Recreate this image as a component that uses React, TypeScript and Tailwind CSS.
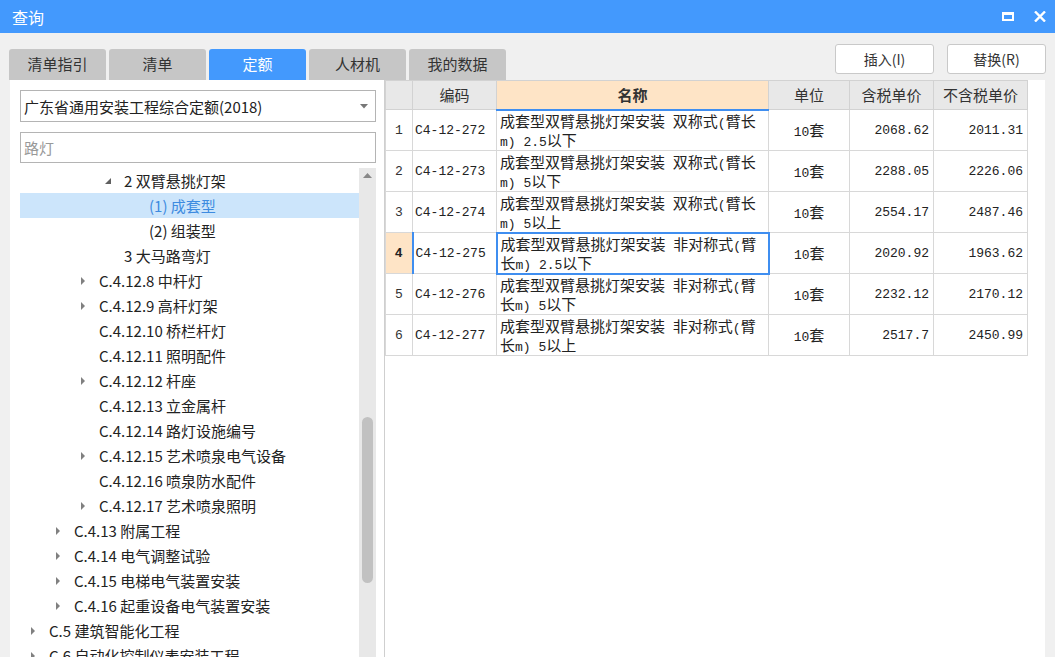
import React from 'react';

// 查询窗口：左侧定额树，右侧定额列表
const TABS = ['清单指引', '清单', '定额', '人材机', '我的数据'];

type TreeNode = { level: number; arrow?: 'open' | 'closed'; text: string; selected?: boolean };

const TREE: TreeNode[] = [
  { level: 3, arrow: 'open', text: '2 双臂悬挑灯架' },
  { level: 4, text: '(1) 成套型', selected: true },
  { level: 4, text: '(2) 组装型' },
  { level: 3, text: '3 大马路弯灯' },
  { level: 2, arrow: 'closed', text: 'C.4.12.8 中杆灯' },
  { level: 2, arrow: 'closed', text: 'C.4.12.9 高杆灯架' },
  { level: 2, text: 'C.4.12.10 桥栏杆灯' },
  { level: 2, text: 'C.4.12.11 照明配件' },
  { level: 2, arrow: 'closed', text: 'C.4.12.12 杆座' },
  { level: 2, text: 'C.4.12.13 立金属杆' },
  { level: 2, text: 'C.4.12.14 路灯设施编号' },
  { level: 2, arrow: 'closed', text: 'C.4.12.15 艺术喷泉电气设备' },
  { level: 2, text: 'C.4.12.16 喷泉防水配件' },
  { level: 2, arrow: 'closed', text: 'C.4.12.17 艺术喷泉照明' },
  { level: 1, arrow: 'closed', text: 'C.4.13 附属工程' },
  { level: 1, arrow: 'closed', text: 'C.4.14 电气调整试验' },
  { level: 1, arrow: 'closed', text: 'C.4.15 电梯电气装置安装' },
  { level: 1, arrow: 'closed', text: 'C.4.16 起重设备电气装置安装' },
  { level: 0, arrow: 'closed', text: 'C.5 建筑智能化工程' },
  { level: 0, arrow: 'closed', text: 'C.6 自动化控制仪表安装工程' },
];

const INDENT = ['pl-[10px]', 'pl-[35px]', 'pl-[60px]', 'pl-[85px]', 'pl-[110px]'];

const ROWS = [
  { code: 'C4-12-272', name: ['成套型双臂悬挑灯架安装 双称式(臂长', 'm) 2.5以下'], unit: '10套', tax: '2068.62', noTax: '2011.31' },
  { code: 'C4-12-273', name: ['成套型双臂悬挑灯架安装 双称式(臂长', 'm) 5以下'], unit: '10套', tax: '2288.05', noTax: '2226.06' },
  { code: 'C4-12-274', name: ['成套型双臂悬挑灯架安装 双称式(臂长', 'm) 5以上'], unit: '10套', tax: '2554.17', noTax: '2487.46' },
  { code: 'C4-12-275', name: ['成套型双臂悬挑灯架安装 非对称式(臂', '长m) 2.5以下'], unit: '10套', tax: '2020.92', noTax: '1963.62' },
  { code: 'C4-12-276', name: ['成套型双臂悬挑灯架安装 非对称式(臂', '长m) 5以下'], unit: '10套', tax: '2232.12', noTax: '2170.12' },
  { code: 'C4-12-277', name: ['成套型双臂悬挑灯架安装 非对称式(臂', '长m) 5以上'], unit: '10套', tax: '2517.7', noTax: '2450.99' },
];

const SELECTED_ROW = 3;

// 半角字符用等宽字体，模拟宋体的效果
const Mixed: React.FC<{ text: string }> = ({ text }) => (
  <>
    {text.split(/([\x20-\x7e]+)/).map((part, i) =>
      /^[\x20-\x7e]+$/.test(part) ? (
        <span key={i} className="font-['Liberation_Mono',monospace] text-[13px] leading-none whitespace-pre">
          {part}
        </span>
      ) : (
        <React.Fragment key={i}>{part}</React.Fragment>
      )
    )}
  </>
);

const TreeArrow: React.FC<{ kind?: 'open' | 'closed' }> = ({ kind }) => {
  if (kind === 'open') {
    return (
      <svg width="8" height="8" viewBox="0 0 8 8" className="ml-[-1px]">
        <polygon points="7,1 7,7 1,7" fill="#606060" />
      </svg>
    );
  }
  if (kind === 'closed') {
    return (
      <svg width="6" height="10" viewBox="0 0 6 10">
        <polygon points="1,1 5,5 1,9" fill="#808080" />
      </svg>
    );
  }
  return null;
};

const headCell = 'border border-[#d2d2d2] bg-[#e8e8e8] font-normal text-[#333]';
const bodyCell = 'border border-[#d8d8d8]';
const monoCell = "font-['Liberation_Mono',monospace] text-[13px] leading-none";

const App: React.FC = () => {
  return (
    <div className="w-[1055px] h-[657px] overflow-hidden bg-[#f0f0f0] flex flex-col font-['Noto_Sans_CJK_SC',sans-serif] text-[#222]">
      {/* 标题栏 */}
      <div className="h-[33px] shrink-0 bg-[#4399fd] flex items-center justify-between pl-[12px] pr-[9px]">
        <span className="text-white text-[16px] leading-none">查询</span>
        <div className="flex items-center gap-[20px]">
          <svg width="12" height="9" viewBox="0 0 12 9">
            <rect x="1" y="1.5" width="10" height="6.5" fill="none" stroke="#fff" strokeWidth="2" />
            <rect x="0" y="0" width="12" height="3" fill="#fff" />
          </svg>
          <svg width="12" height="11" viewBox="0 0 12 11">
            <path d="M1 0.5 L11 10.5 M11 0.5 L1 10.5" stroke="#fff" strokeWidth="2.4" />
          </svg>
        </div>
      </div>

      {/* 页签与按钮 */}
      <div className="h-[47px] shrink-0 flex justify-between pl-[9px] pr-[9px]">
        <div className="flex items-end gap-[3px]">
          {TABS.map((tab, i) => (
            <div
              key={tab}
              className={
                i === 2
                  ? 'w-[97px] h-[31px] rounded-t-[3px] bg-[#4399fd] text-white text-[15px] flex items-center justify-center'
                  : 'w-[97px] h-[31px] rounded-t-[3px] bg-[#c6c6c6] text-[#333] text-[15px] flex items-center justify-center'
              }
            >
              {tab}
            </div>
          ))}
        </div>
        <div className="flex gap-[13px] pt-[11px]">
          <button className="w-[99px] h-[30px] bg-white border border-[#c9c9c9] rounded-[3px] text-[14px] text-[#333]">
            插入(I)
          </button>
          <button className="w-[99px] h-[30px] bg-white border border-[#c9c9c9] rounded-[3px] text-[14px] text-[#333]">
            替换(R)
          </button>
        </div>
      </div>

      <div className="flex-1 min-h-0 flex pl-[10px] pr-[10px]">
        {/* 左侧：定额库与章节树 */}
        <div className="w-[374px] shrink-0 bg-white flex flex-col">
          <div className="mt-[10px] ml-[10px] w-[356px] h-[32px] border border-[#b4b4b4] flex items-center justify-between pl-[3px] pr-[7px]">
            <span className="text-[15px] leading-none text-[#222]">广东省通用安装工程综合定额(2018)</span>
            <svg width="8" height="5" viewBox="0 0 8 5">
              <polygon points="0,0 8,0 4,4.5" fill="#777" />
            </svg>
          </div>
          <div className="mt-[10px] ml-[10px] w-[356px] h-[31px] border border-[#b4b4b4] flex items-center pl-[3px]">
            <span className="text-[15px] leading-none text-[#999]">路灯</span>
          </div>

          <div className="mt-[5px] flex-1 min-h-0 flex">
            <div className="ml-[10px] w-[339px] overflow-hidden">
              {TREE.map((node, i) => (
                <div
                  key={i}
                  className={`h-[25px] shrink-0 flex items-center ${INDENT[node.level]} ${
                    node.selected ? 'bg-[#cce5fb] text-[#3d8be0]' : 'text-[#222]'
                  }`}
                >
                  <span className="w-[19px] shrink-0 flex items-center">
                    <TreeArrow kind={node.arrow} />
                  </span>
                  <span className="text-[15px] leading-none whitespace-nowrap">{node.text}</span>
                </div>
              ))}
            </div>
            <div className="w-[17px] shrink-0 bg-[#e8e8e8] flex flex-col items-center">
              <div className="h-[15px] w-full flex items-center justify-center">
                <svg width="9" height="5" viewBox="0 0 9 5">
                  <polygon points="0,5 9,5 4.5,0" fill="#888" />
                </svg>
              </div>
              <div className="mt-[234px] w-[11px] h-[166px] rounded-[6px] bg-[#c1c1c1]" />
            </div>
          </div>
        </div>

        {/* 右侧：定额列表 */}
        <div className="flex-1 min-w-0 bg-white border-l border-[#cfcfcf]">
          <table className="table-fixed border-collapse w-[642px] text-[15px]">
            <colgroup>
              <col className="w-[27px]" />
              <col className="w-[84px]" />
              <col className="w-[272px]" />
              <col className="w-[81px]" />
              <col className="w-[84px]" />
              <col className="w-[94px]" />
            </colgroup>
            <thead>
              <tr className="h-[29px]">
                <th className={headCell} />
                <th className={headCell}>编码</th>
                <th className="border border-[#d2d2d2] border-b-2 border-b-[#3f8ef0] bg-[#fee4c6] font-bold text-[#333]">
                  名称
                </th>
                <th className={headCell}>单位</th>
                <th className={headCell}>含税单价</th>
                <th className={headCell}>不含税单价</th>
              </tr>
            </thead>
            <tbody>
              {ROWS.map((row, i) => {
                const sel = i === SELECTED_ROW;
                return (
                  <tr key={row.code} className="h-[41px]">
                    <td className={`${bodyCell} ${monoCell} text-center ${sel ? 'bg-[#fee4c6] font-bold' : 'text-[#333]'}`}>
                      {i + 1}
                    </td>
                    <td className={`${bodyCell} ${monoCell} pl-[2px] ${sel ? 'border-l-2 border-l-[#3f8ef0]' : ''}`}>
                      {row.code}
                    </td>
                    <td className={`${sel ? 'border-2 border-[#3f8ef0]' : bodyCell} pl-[3px] leading-[19px] whitespace-nowrap`}>
                      <div className="h-[19px] flex items-center">
                        <span>
                          <Mixed text={row.name[0]} />
                        </span>
                      </div>
                      <div className="h-[19px] flex items-center">
                        <span>
                          <Mixed text={row.name[1]} />
                        </span>
                      </div>
                    </td>
                    <td className={`${bodyCell} text-center leading-none`}>
                      <Mixed text={row.unit} />
                    </td>
                    <td className={`${bodyCell} ${monoCell} text-right pr-[4px]`}>{row.tax}</td>
                    <td className={`${bodyCell} ${monoCell} text-right pr-[4px]`}>{row.noTax}</td>
                  </tr>
                );
              })}
            </tbody>
          </table>
        </div>
      </div>
    </div>
  );
};

export default App;
